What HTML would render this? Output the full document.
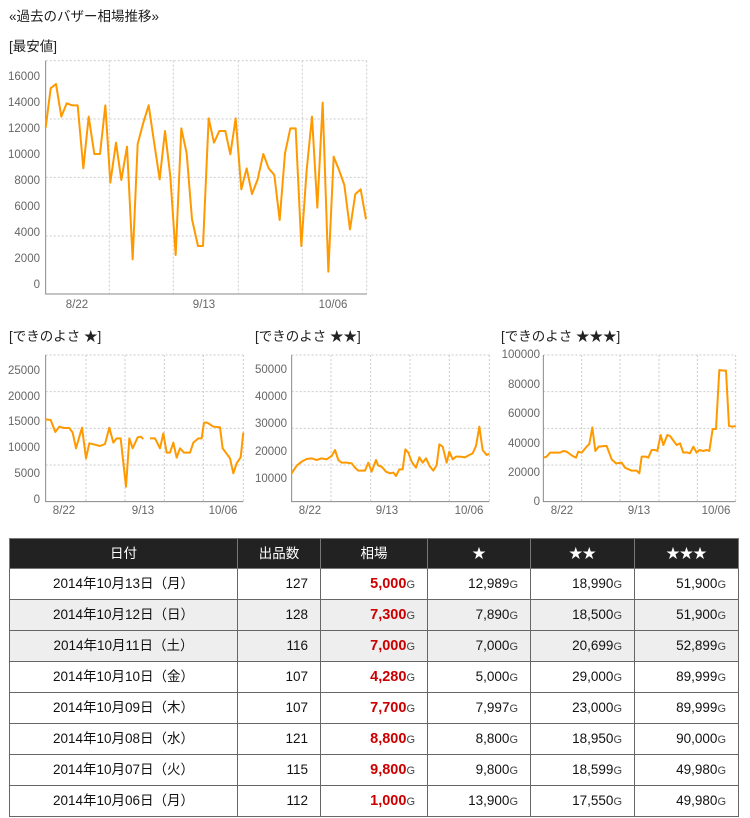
<!DOCTYPE html>
<html><head><meta charset="utf-8"><style>
body{margin:0;width:750px;height:818px;overflow:hidden;background:#fff;font-family:"Liberation Sans","Noto Sans CJK JP",sans-serif;position:relative}
.t{position:absolute;font-size:13.5px;color:#222;white-space:nowrap}
svg{position:absolute;left:0;top:0}
svg text{font-family:"Liberation Sans",sans-serif;font-size:11.5px;fill:#666}
table{position:absolute;left:9px;top:538px;border-collapse:collapse;width:729px;table-layout:fixed;font-size:13.5px;color:#111}
td,th{border:1px solid #666;height:31px;padding:0 12px 0 0;text-align:right;box-sizing:border-box;line-height:16px;vertical-align:middle}
th{background:#222;color:#fff;font-weight:normal;text-align:center;padding:0;height:30px;border-color:#777}
td:first-child{text-align:center;padding:0}
tr.g td{background:#eee}
b{color:#c00;font-size:14.5px}
small{font-size:11px;color:#444}
</style></head><body>
<div class="t" style="left:9px;top:5px">«過去のバザー相場推移»</div>
<div class="t" style="left:9px;top:35px">[最安値]</div>
<div class="t" style="left:9px;top:325px">[できのよさ ★]</div>
<div class="t" style="left:255px;top:325px">[できのよさ ★★]</div>
<div class="t" style="left:501px;top:325px">[できのよさ ★★★]</div>
<svg width="750" height="530">
<g transform="scale(0.33333)" fill="none">
<g stroke="#ccc" stroke-width="3" stroke-dasharray="6,6">
<path d="M137 182H1100M137 357H1100M137 532H1100M137 708H1100M328 182V882M520 182V882M715 182V882M907 182V882M1100 182V882"/>
</g>
<path d="M137 182V882H1100" stroke="#888" stroke-width="3"/>
<polyline stroke="#f90" stroke-width="6" stroke-linejoin="round" points="137,383 152,265 168,252 184,350 200,310 216,316 233,316 250,505 266,350 283,462 300,462 316,316 331,548 348,428 364,540 381,440 398,778 413,432 430,368 446,316 462,425 479,538 495,393 511,530 527,765 544,385 560,460 576,658 594,738 609,738 626,355 642,428 658,393 676,393 691,463 707,355 724,568 740,505 756,582 773,538 790,462 806,505 823,525 839,660 855,460 871,385 887,385 904,738 920,510 936,350 952,623 968,308 985,815 1001,470 1017,510 1033,555 1050,688 1066,582 1082,568 1098,658"/>
</g>
<g transform="translate(0,320) scale(0.33333)" fill="none">
<g stroke="#ccc" stroke-width="3" stroke-dasharray="6,6">
<path d="M137 105H730M137 215H730M137 325H730M137 435H730M258 105V545M375 105V545M493 105V545M610 105V545M730 105V545"/>
<path d="M875 105H1468M875 215H1468M875 325H1468M875 435H1468M993 105V545M1112 105V545M1230 105V545M1348 105V545M1468 105V545"/>
</g>
<path d="M137 105V545H730M875 105V545H1468" stroke="#888" stroke-width="3"/>
<polyline stroke="#f90" stroke-width="6" stroke-linejoin="round" points="137,298 152,300 166,336 178,320 192,324 208,324 218,338 228,385 246,323 258,415 268,370 285,374 300,378 315,372 328,323 340,368 350,355 362,355 378,500 388,355 398,385 413,352 422,350 430,357"/>
<polyline stroke="#f90" stroke-width="6" stroke-linejoin="round" points="450,355 465,355 480,385 490,340 500,398 510,398 520,368 530,413 540,385 552,398 570,398 580,368 595,355 605,355 612,308 622,308 640,320 660,322 668,385 690,415 700,460 710,430 722,412 730,338"/>
<polyline stroke="#f90" stroke-width="6" stroke-linejoin="round" points="875,460 890,437 905,425 920,417 935,415 950,420 965,415 980,418 995,408 1005,390 1015,420 1025,428 1040,428 1055,430 1065,443 1075,452 1095,452 1105,428 1115,455 1128,420 1135,437 1145,440 1158,455 1170,460 1180,458 1188,468 1198,448 1208,448 1216,388 1225,398 1235,425 1248,443 1258,412 1268,428 1278,415 1290,440 1300,452 1310,435 1318,373 1328,380 1340,428 1348,395 1358,418 1368,410 1380,410 1395,412 1408,405 1418,400 1428,378 1438,320 1448,390 1460,405 1468,402"/>
</g>
<g transform="translate(490,320) scale(0.33333)" fill="none">
<g stroke="#ccc" stroke-width="3" stroke-dasharray="6,6">
<path d="M160 105H737M160 215H737M160 325H737M160 435H737M275 105V545M390 105V545M507 105V545M622 105V545M737 105V545"/>
</g>
<path d="M160 105V545H737" stroke="#888" stroke-width="3"/>
<polyline stroke="#f90" stroke-width="6" stroke-linejoin="round" points="160,413 170,410 180,398 210,398 220,393 230,395 248,408 258,413 265,395 275,398 290,380 298,372 307,322 316,393 326,380 345,378 350,378 365,418 378,430 395,428 405,443 425,452 440,452 448,460 455,410 468,410 475,413 485,390 495,390 502,393 512,345 520,375 532,345 540,348 560,375 570,370 580,398 590,397 600,400 610,380 620,398 628,390 640,393 650,390 658,393 668,327 678,327 688,150 700,152 708,152 717,318 728,320 737,318"/>
</g>
<g text-anchor="end">
<text x="40" y="80">16000</text><text x="40" y="106">14000</text><text x="40" y="132">12000</text><text x="40" y="158">10000</text><text x="40" y="184">8000</text><text x="40" y="210">6000</text><text x="40" y="236">4000</text><text x="40" y="262">2000</text><text x="40" y="288">0</text>
<text x="40" y="374">25000</text><text x="40" y="400">20000</text><text x="40" y="425">15000</text><text x="40" y="451">10000</text><text x="40" y="477">5000</text><text x="40" y="503">0</text>
<text x="287" y="373">50000</text><text x="287" y="400">40000</text><text x="287" y="427">30000</text><text x="287" y="455">20000</text><text x="287" y="482">10000</text>
<text x="540" y="358">100000</text><text x="540" y="388">80000</text><text x="540" y="417">60000</text><text x="540" y="447">40000</text><text x="540" y="476">20000</text><text x="540" y="505">0</text>
</g>
<g text-anchor="middle">
<text x="77" y="308">8/22</text><text x="204" y="308">9/13</text><text x="333" y="308">10/06</text>
<text x="64" y="514">8/22</text><text x="143" y="514">9/13</text><text x="223" y="514">10/06</text>
<text x="310" y="514">8/22</text><text x="387" y="514">9/13</text><text x="469" y="514">10/06</text>
<text x="562" y="514">8/22</text><text x="639" y="514">9/13</text><text x="716" y="514">10/06</text>
</g>
</svg>
<table>
<colgroup><col style="width:228px"><col style="width:83px"><col style="width:107px"><col style="width:103px"><col style="width:104px"><col style="width:104px"></colgroup>
<tr><th>日付</th><th>出品数</th><th>相場</th><th>★</th><th>★★</th><th>★★★</th></tr>
<tr><td>2014年10月13日（月）</td><td>127</td><td><b>5,000</b><small>G</small></td><td>12,989<small>G</small></td><td>18,990<small>G</small></td><td>51,900<small>G</small></td></tr>
<tr class="g"><td>2014年10月12日（日）</td><td>128</td><td><b>7,300</b><small>G</small></td><td>7,890<small>G</small></td><td>18,500<small>G</small></td><td>51,900<small>G</small></td></tr>
<tr class="g"><td>2014年10月11日（土）</td><td>116</td><td><b>7,000</b><small>G</small></td><td>7,000<small>G</small></td><td>20,699<small>G</small></td><td>52,899<small>G</small></td></tr>
<tr><td>2014年10月10日（金）</td><td>107</td><td><b>4,280</b><small>G</small></td><td>5,000<small>G</small></td><td>29,000<small>G</small></td><td>89,999<small>G</small></td></tr>
<tr><td>2014年10月09日（木）</td><td>107</td><td><b>7,700</b><small>G</small></td><td>7,997<small>G</small></td><td>23,000<small>G</small></td><td>89,999<small>G</small></td></tr>
<tr><td>2014年10月08日（水）</td><td>121</td><td><b>8,800</b><small>G</small></td><td>8,800<small>G</small></td><td>18,950<small>G</small></td><td>90,000<small>G</small></td></tr>
<tr><td>2014年10月07日（火）</td><td>115</td><td><b>9,800</b><small>G</small></td><td>9,800<small>G</small></td><td>18,599<small>G</small></td><td>49,980<small>G</small></td></tr>
<tr><td>2014年10月06日（月）</td><td>112</td><td><b>1,000</b><small>G</small></td><td>13,900<small>G</small></td><td>17,550<small>G</small></td><td>49,980<small>G</small></td></tr>
</table>
</body></html>
